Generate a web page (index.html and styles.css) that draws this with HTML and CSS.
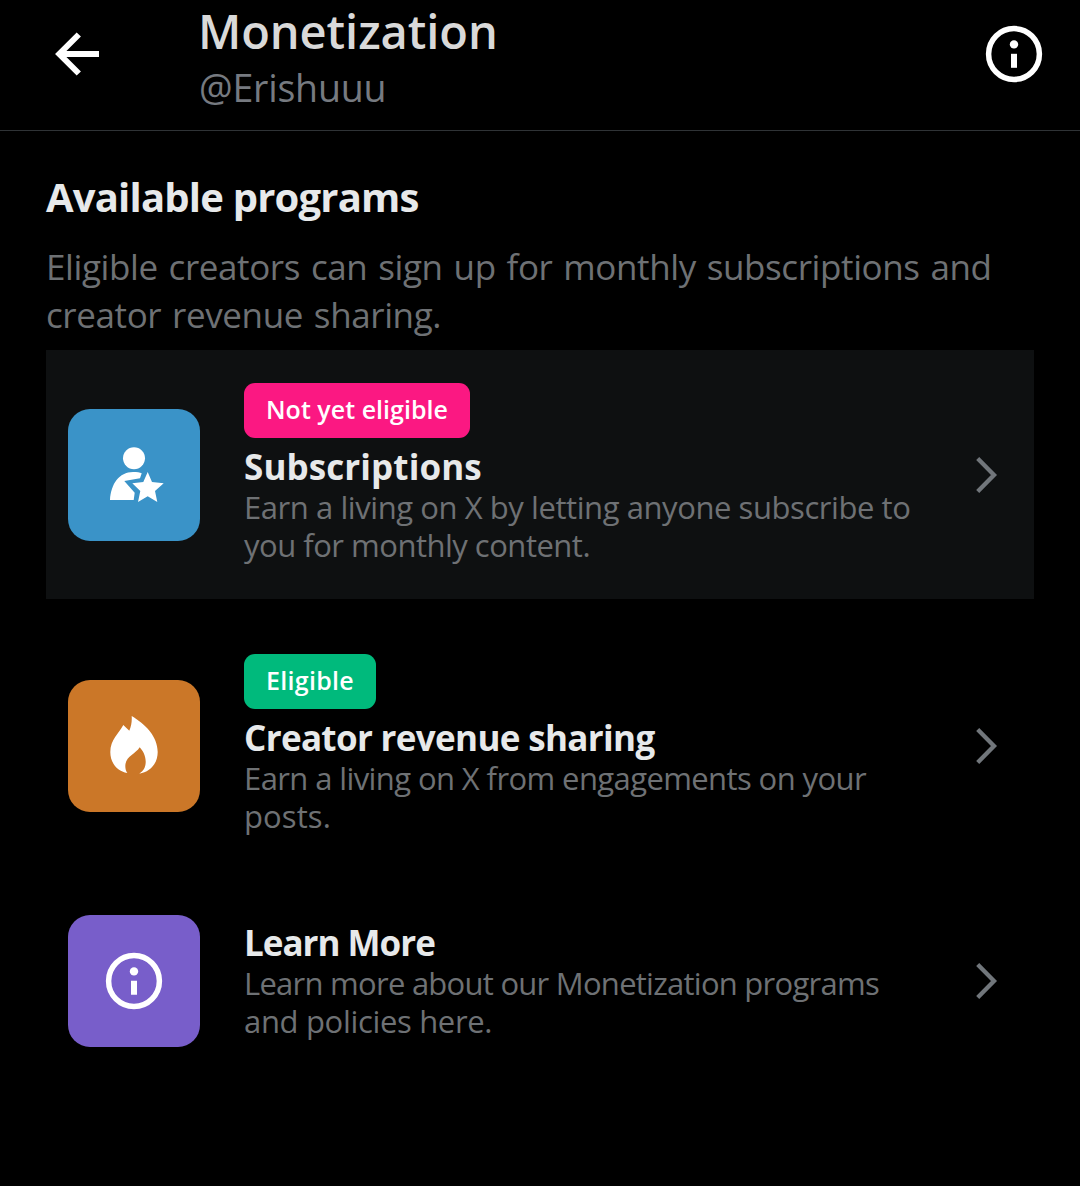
FILE: index.html
```html
<!DOCTYPE html>
<html lang="en">
<head>
<meta charset="utf-8">
<title>Monetization</title>
<link rel="stylesheet" href="styles.css">
</head>
<body>
<header class="topbar">
  <svg class="back" viewBox="0 0 66 66" fill="none" stroke="#fff" stroke-width="6"><path d="M56.8 13.5 37.3 33l19.5 19.5M36 33h41"/></svg>
  <div class="heading">
    <h1 class="screen-title">Monetization</h1>
    <p class="handle">@Erishuuu</p>
  </div>
  <svg class="info" viewBox="0 0 66 66"><circle cx="33" cy="33" r="25.4" fill="none" stroke="#fff" stroke-width="5.5"/><circle cx="33" cy="23.4" r="4.2" fill="#fff"/><path d="M30 32.8h6v14h-6z" fill="#fff"/></svg>
</header>
<main class="content">
  <h2 class="section-title">Available programs</h2>
  <p class="section-text">Eligible creators can sign up for monthly subscriptions and<br>creator revenue sharing.</p>
  <div class="programs">
    <a class="program program-active">
      <svg class="tile tile-blue" viewBox="0 0 132 132" fill="#fff"><circle cx="66" cy="49.3" r="11"/><path d="M42 91C43 75 51 63 65 63c4 0 7 .4 8.7 1.3L72 69.300 56.300 72l10.400 11.700-1 7.300z"/><path d="M79.700 63 84 73l11.700 1.300L87 82l2.300 11-9.600-5.700L70 93l2.300-11-8-7.700L75.300 73z"/></svg>
      <div class="details">
        <span class="badge badge-pink">Not yet eligible</span>
        <h3 class="name name-subscriptions">Subscriptions</h3>
        <p class="about"><span class="snug">Earn a living on X by letting anyone subscribe to</span><br>you for monthly content.</p>
      </div>
      <svg class="chevron" viewBox="0 0 24 40"><path d="M3.700 3.500 20 20 3.700 36.500"/></svg>
    </a>
    <a class="program program-tall">
      <svg class="tile tile-orange" viewBox="0 0 132 132" fill="#fff"><path d="M63.700 36C77 44 89.700 56 89.700 72c0 12-8 20-18.400 21.700 4-3 6.400-6 6.400-12 0-6-2.700-10.700-6-14.400-4 6.700-14.400 9-14.400 18.700 0 3 .7 5 2 7C49 91 42.300 83 42.300 72c0-12 8.700-19 13-27l6 5.700c2-4.700 2.700-9 2.400-14.700z"/></svg>
      <div class="details">
        <span class="badge badge-green">Eligible</span>
        <h3 class="name name-revenue">Creator revenue sharing</h3>
        <p class="about"><span class="tight">Earn a living on X from engagements on your</span><br><span class="loose">posts.</span></p>
      </div>
      <svg class="chevron" viewBox="0 0 24 40"><path d="M3.700 3.500 20 20 3.700 36.500"/></svg>
    </a>
    <a class="program program-short">
      <svg class="tile tile-purple" viewBox="0 0 132 132"><circle cx="66" cy="66" r="25.400" fill="none" stroke="#fff" stroke-width="5.500"/><circle cx="66" cy="56.400" r="4.200" fill="#fff"/><path d="M63 65.800h6v14h-6z" fill="#fff"/></svg>
      <div class="details">
        <h3 class="name name-learn">Learn More</h3>
        <p class="about"><span class="tighter">Learn more about our Monetization programs</span><br><span class="snugger">and policies here.</span></p>
      </div>
      <svg class="chevron" viewBox="0 0 24 40"><path d="M3.700 3.500 20 20 3.700 36.500"/></svg>
    </a>
  </div>
</main>
</body>
</html>
```
FILE: styles.css
```css
* { box-sizing: border-box; }
body { margin: 0; min-height: 1186px; background: #000; font-family: "Open Sans", sans-serif; color: #e7e9ea; }
h1, h2, h3, p { margin: 0; white-space: nowrap; }
svg { display: block; flex: none; }

.topbar { display: flex; height: 131px; padding: 0 33px 0 22px; border-bottom: 1px solid #2f3336; }
.back { width: 66px; height: 66px; margin-top: 21px; overflow: visible; }
.info { width: 66px; height: 66px; margin-top: 21px; }
.heading { flex: 1; padding: 1px 0 0 110px; }
.screen-title { font-size: 47px; line-height: 60px; font-weight: 600; color: #d9d9d9; letter-spacing: -0.08px; }
.handle { padding: 1px 0 0 1px; font-size: 37.5px; line-height: 52px; color: #767a80; letter-spacing: -0.2px; }

.content { padding: 38px 46px 0; }
.section-title { font-size: 40px; line-height: 56px; font-weight: 700; letter-spacing: -0.8px; }
.section-text { margin-top: 18px; font-size: 35px; line-height: 48px; color: #6e7174; letter-spacing: -0.4px; word-spacing: 2.2px; }

.programs { display: flex; flex-direction: column; gap: 22px; padding-top: 11px; }
.program { display: flex; align-items: center; height: 249px; padding: 0 36px 0 22px; }
.program-active { background: #0e1011; }
.program-tall { height: 250px; }
.program-short { height: 176px; }
.tile { width: 132px; height: 132px; border-radius: 22px; }
.tile-blue { background: #3a93c8; margin-top: 1px; }
.tile-orange { background: #cb7728; }
.tile-purple { background: #785eca; }

.details { flex: 1; padding: 0 0 2px 44px; }
.program-tall .details { padding-bottom: 4px; }
.badge { display: block; width: fit-content; height: 55px; padding: 0 22px; border-radius: 11px; margin-bottom: 6px; font-size: 25px; line-height: 53px; font-weight: 600; color: #fff; }
.badge-pink { background: #fb1882; letter-spacing: 0.03px; }
.badge-green { background: #00ba7c; letter-spacing: 0.29px; }
.name { padding-top: 2px; font-size: 35px; line-height: 42px; font-weight: 700; }
.name-subscriptions { letter-spacing: 0.1px; }
.name-revenue { letter-spacing: -0.66px; }
.name-learn { letter-spacing: -1px; }
.about { font-size: 31px; line-height: 38px; color: #6e7174; letter-spacing: -0.5px; }
.snugger { letter-spacing: -0.33px; }
.snug { letter-spacing: -0.43px; }
.tight { letter-spacing: -0.6px; }
.tighter { letter-spacing: -0.74px; }
.loose { letter-spacing: 0.1px; }
.chevron { width: 24px; height: 40px; fill: none; stroke: #71767b; stroke-width: 4.3; }
```
